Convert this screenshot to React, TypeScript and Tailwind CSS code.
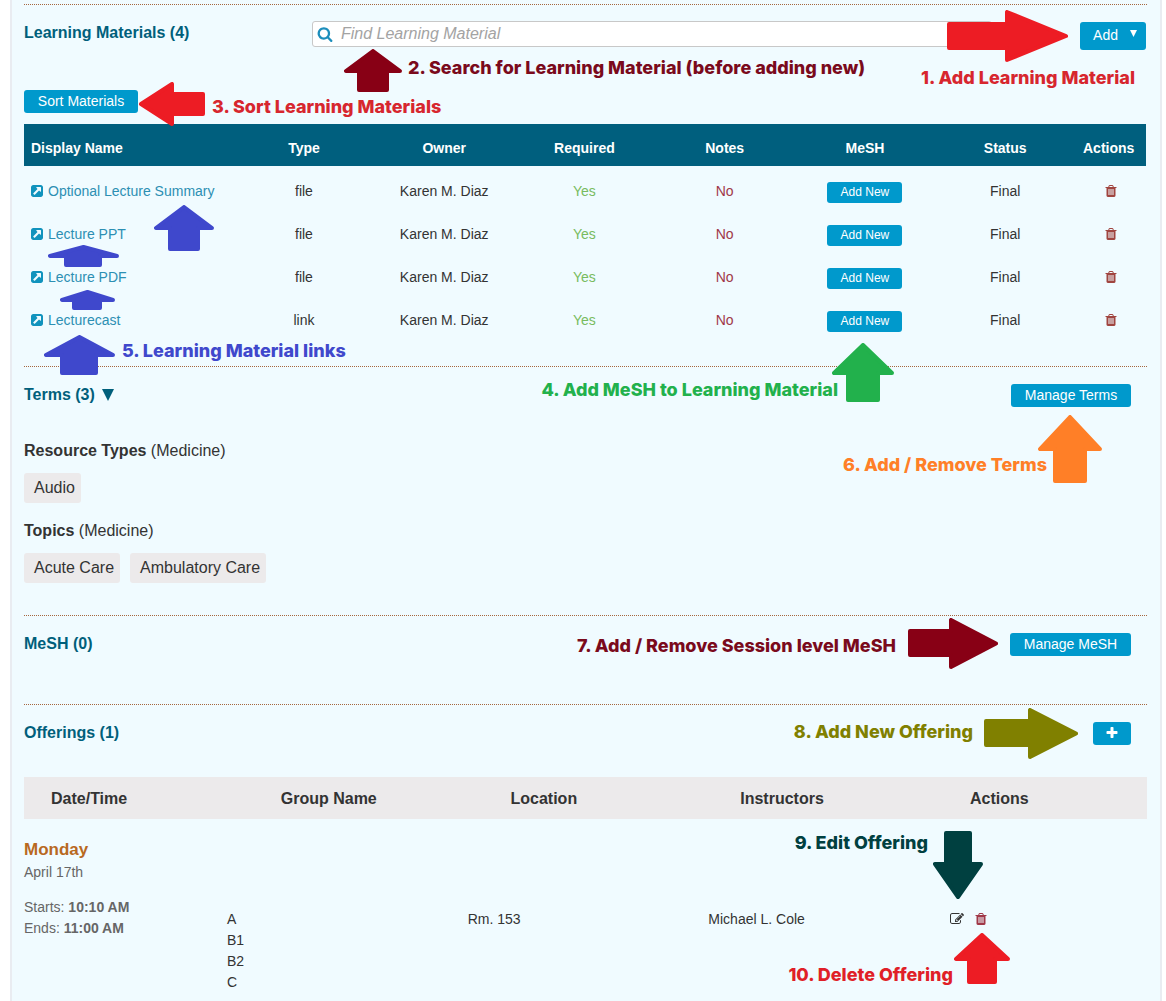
import React from 'react';

const PATHS = {
  search:
    'M1216 832q0-185-131.5-316.5t-316.5-131.5-316.5 131.5-131.5 316.5 131.5 316.5 316.5 131.5 316.5-131.5 131.5-316.5zm512 832q0 52-38 90t-90 38q-54 0-90-38l-343-342q-179 124-399 124-143 0-273.5-55.5t-225-150-150-225-55.5-273.5 55.5-273.5 150-225 225-150 273.5-55.5 273.5 55.5 225 150 150 225 55.5 273.5q0 220-124 399l343 343q37 37 37 90z',
  trash:
    'M704 1376v-704q0-14-9-23t-23-9h-64q-14 0-23 9t-9 23v704q0 14 9 23t23 9h64q14 0 23-9t9-23zm256 0v-704q0-14-9-23t-23-9h-64q-14 0-23 9t-9 23v704q0 14 9 23t23 9h64q14 0 23-9t9-23zm256 0v-704q0-14-9-23t-23-9h-64q-14 0-23 9t-9 23v704q0 14 9 23t23 9h64q14 0 23-9t9-23zm-544-992h448l-48-117q-7-9-17-11h-317q-10 2-17 11zm928 32v64q0 14-9 23t-23 9h-96v948q0 83-47 143.5t-113 60.5h-832q-66 0-113-58.5t-47-141.5v-952h-96q-14 0-23-9t-9-23v-64q0-14 9-23t23-9h309l70-167q15-37 54-63t79-26h320q40 0 79 26t54 63l70 167h309q14 0 23 9t9 23z',
  edit:
    'M888 1184l116-116-152-152-116 116v56h96v96h56zm440-720q-16-16-33 1l-350 350q-17 17-1 33t33-1l350-350q17-17 1-33zm80 594v190q0 119-84.5 203.5t-203.5 84.5h-832q-119 0-203.5-84.5t-84.5-203.5v-832q0-119 84.5-203.5t203.5-84.5h832q63 0 117 25 15 7 18 23 3 17-9 29l-49 49q-14 14-32 8-23-6-45-6h-832q-66 0-113 47t-47 113v832q0 66 47 113t113 47h832q66 0 113-47t47-113v-126q0-13 9-22l64-64q15-15 35-7t20 29zm-96-738l288 288-672 672h-288v-288zm444 132l-92 92-288-288 92-92q28-28 68-28t68 28l152 152q28 28 28 68t-28 68z',
  external:
    'M1408 928v-480q0-26-19-45t-45-19h-480q-42 0-59 39-17 41 14 70l144 144-534 534q-19 19-19 45t19 45l102 102q19 19 45 19t45-19l534-534 144 144q18 19 45 19 12 0 25-5 39-17 39-59zm256-512v960q0 119-84.5 203.5t-203.5 84.5h-960q-119 0-203.5-84.5t-84.5-203.5v-960q0-119 84.5-203.5t203.5-84.5h960q119 0 203.5 84.5t84.5 203.5z',
  plus: 'M1600 736v192q0 40-28 68t-68 28h-416v416q0 40-28 68t-68 28h-192q-40 0-68-28t-28-68v-416h-416q-40 0-68-28t-28-68v-192q0-40 28-68t68-28h416v-416q0-40 28-68t68-28h192q40 0 68 28t28 68v416h416q40 0 68 28t28 68z',
};

function Icon({ name, className }: { name: keyof typeof PATHS; className: string }) {
  return (
    <svg viewBox="0 0 1792 1792" fill="currentColor" aria-hidden="true" className={className}>
      <path d={PATHS[name]} />
    </svg>
  );
}

type Dir = 'up' | 'down' | 'left' | 'right';

/* Block arrow: `head` is the length of the head, `from` and `to` bound the shaft across. */
function Arrow({
  dir,
  w,
  h,
  head,
  from,
  to,
  className,
}: {
  dir: Dir;
  w: number;
  h: number;
  head: number;
  from: number;
  to: number;
  className: string;
}) {
  const vertical = dir === 'up' || dir === 'down';
  const length = vertical ? h : w;
  const across = vertical ? w : h;
  const r = 2;
  const outline = [
    [r, across / 2],
    [head - r, r],
    [head - r, from + r],
    [length - r, from + r],
    [length - r, to - r],
    [head - r, to - r],
    [head - r, across - r],
  ];
  const place = ([a, b]: number[]) => {
    if (dir === 'up') return [b, a];
    if (dir === 'down') return [b, h - a];
    if (dir === 'left') return [a, b];
    return [w - a, b];
  };
  return (
    <svg
      width={w}
      height={h}
      viewBox={`0 0 ${w} ${h}`}
      aria-hidden="true"
      className={`pointer-events-none absolute ${className}`}
    >
      <polygon
        points={outline.map((p) => place(p).join(',')).join(' ')}
        fill="currentColor"
        stroke="currentColor"
        strokeWidth={r * 2}
        strokeLinejoin="round"
      />
    </svg>
  );
}

function Note({ className, children }: { className: string; children: React.ReactNode }) {
  return (
    <p
      className={`absolute whitespace-nowrap font-[Inter,sans-serif] text-[18px] leading-[26px] font-extrabold ${className}`}
    >
      {children}
    </p>
  );
}

function Section({ className, children }: { className: string; children: React.ReactNode }) {
  return <section className={`relative border-t border-dotted border-[#a5673f] ${className}`}>{children}</section>;
}

function Title({ children }: { children: React.ReactNode }) {
  return <h2 className="text-base leading-6 font-bold text-[#005f7b]">{children}</h2>;
}

const ACTION = 'flex h-[23px] items-center justify-center rounded-[3px] bg-[#0099cc] pb-px text-sm text-white';

const MATERIALS = [
  { name: 'Optional Lecture Summary', type: 'file' },
  { name: 'Lecture PPT', type: 'file' },
  { name: 'Lecture PDF', type: 'file' },
  { name: 'Lecturecast', type: 'link' },
];

function Materials() {
  return (
    <Section className="pb-7">
      <div className="flex h-[61px] items-start pt-4">
        <div className="w-72 shrink-0">
          <Title>Learning Materials (4)</Title>
        </div>
        <div className="mr-[88px] flex h-[26px] flex-1 items-center rounded-[3px] border border-[#c8c8c8] bg-white pl-1">
          <Icon name="search" className="size-4 text-[#1d8ebc]" />
          <input
            type="text"
            aria-label="Find Learning Material"
            placeholder="Find Learning Material"
            className="ml-2 h-6 min-w-0 flex-1 bg-transparent text-base italic outline-none placeholder:text-[#a3a3a3]"
          />
        </div>
        <button
          type="button"
          className="mt-px mr-px flex h-7 w-[66px] shrink-0 items-center justify-end rounded-[3px] bg-[#0099cc] pr-[9px] pb-0.5 text-sm text-white"
        >
          Add
          <svg viewBox="0 0 8 8" className="mb-1 ml-3 size-[7px]" fill="currentColor" aria-hidden="true">
            <path d="M0 0h8l-4 8z" />
          </svg>
        </button>
      </div>

      <div className="flex h-[58px] items-start pt-6">
        <button type="button" className={`${ACTION} w-[114px]`}>
          Sort Materials
        </button>
      </div>

      <div className="pr-px">
        <table className="w-full table-fixed border-collapse text-sm text-[#333]">
          <colgroup>
            <col />
            <col className="w-[12.5%]" />
            <col className="w-[12.5%]" />
            <col className="w-[12.5%]" />
            <col className="w-[12.5%]" />
            <col className="w-[12.5%]" />
            <col className="w-[12.5%]" />
            <col className="w-[6.3%]" />
          </colgroup>
          <thead>
            <tr className="h-[42px] bg-[#005f7e] text-white">
              <th className="pt-1.5 pl-[7px] text-left">Display Name</th>
              <th className="pt-1.5">Type</th>
              <th className="pt-1.5">Owner</th>
              <th className="pt-1.5">Required</th>
              <th className="pt-1.5">Notes</th>
              <th className="pt-1.5">MeSH</th>
              <th className="pt-1.5">Status</th>
              <th className="pt-1.5 pr-1">Actions</th>
            </tr>
          </thead>
          <tbody className="text-center">
            {MATERIALS.map((m) => (
              <tr key={m.name} className="h-[43px]">
                <td className="pt-1.5 pl-1.5 text-left">
                  <a href="#" className="flex items-center gap-1 text-[#2c8fb3]">
                    <Icon name="external" className="size-[14px] text-[#1193bd]" />
                    {m.name}
                  </a>
                </td>
                <td className="pt-1.5">{m.type}</td>
                <td className="pt-1.5">Karen M. Diaz</td>
                <td className="pt-1.5 text-[#78bb60]">Yes</td>
                <td className="pt-1.5 text-[#a03848]">No</td>
                <td className="pt-[10px]">
                  <button
                    type="button"
                    className="mx-auto flex h-[21px] w-[75px] items-center justify-center rounded-[3px] bg-[#0099cc] pb-0.5 text-xs text-white"
                  >
                    Add New
                  </button>
                </td>
                <td className="pt-1.5">Final</td>
                <td className="pt-1.5">
                  <button type="button" aria-label={`Delete ${m.name}`} className="mx-auto block text-[#a04540]">
                    <Icon name="trash" className="size-[14px]" />
                  </button>
                </td>
              </tr>
            ))}
          </tbody>
        </table>
      </div>

      <Arrow dir="right" w={121} h={52} head={63} from={12} to={40} className="top-[5px] right-[79px] text-[#ed1c24]" />
      <Note className="top-[60px] right-3 text-[#d7262e]">1. Add Learning Material</Note>
      <Arrow dir="up" w={58} h={43} head={24} from={13} to={45} className="top-11 left-80 text-[#880015]" />
      <Note className="top-[50px] left-96 text-[#7a0a1c]">2. Search for Learning Material (before adding new)</Note>
      <Arrow dir="left" w={66} h={44} head={35} from={10} to={34} className="top-[77px] left-[115px] text-[#ed1c24]" />
      <Note className="top-[89px] left-[188px] text-[#d7262e]">3. Sort Learning Materials</Note>
      <Arrow dir="up" w={60} h={46} head={25} from={14} to={46} className="top-[200px] left-[130px] text-[#3f48cc]" />
      <Arrow dir="up" w={71} h={22} head={13} from={16} to={54} className="top-60 left-6 text-[#3f48cc]" />
      <Arrow dir="up" w={55} h={20} head={12} from={12} to={42} className="top-[285px] left-9 text-[#3f48cc]" />
      <Arrow dir="up" w={71} h={40} head={22} from={16} to={54} className="top-[330px] left-5 z-10 text-[#3f48cc]" />
      <Note className="top-[333px] left-[98px] text-[#3f48cc]">5. Learning Material links</Note>
      <Arrow dir="up" w={62} h={59} head={32} from={14} to={48} className="top-[338px] right-[253px] z-10 text-[#22b14c]" />
    </Section>
  );
}

const TERMS = [
  { group: 'Resource Types', items: ['Audio'] },
  { group: 'Topics', items: ['Acute Care', 'Ambulatory Care'] },
];

function Terms() {
  return (
    <Section className="pb-8">
      <div className="flex items-end justify-between pt-4 pr-4">
        <Title>
          <button type="button" className="flex items-center gap-[7px]">
            Terms (3)
            <svg viewBox="0 0 12 12" className="size-3" fill="currentColor" aria-hidden="true">
              <path d="M0 0h12l-6 12z" />
            </svg>
          </button>
        </Title>
        <button type="button" className={`${ACTION} w-[120px]`}>
          Manage Terms
        </button>
      </div>
      <div className="mt-8 flex flex-col gap-4 text-base text-[#333]">
        {TERMS.map((t) => (
          <div key={t.group}>
            <h3 className="leading-6">
              <b>{t.group}</b> (Medicine)
            </h3>
            <ul className="mt-[10px] flex gap-[10px]">
              {t.items.map((i) => (
                <li key={i} className="flex h-[30px] items-center rounded-[3px] bg-[#eceaeb] pr-1.5 pl-[10px]">
                  {i}
                </li>
              ))}
            </ul>
          </div>
        ))}
      </div>
      <Note className="top-[10px] right-[309px] text-[#22b14c]">4. Add MeSH to Learning Material</Note>
      <Arrow dir="up" w={64} h={68} head={36} from={15} to={49} className="top-12 right-[45px] text-[#ff7f27]" />
      <Note className="top-[85px] right-[100px] text-[#ff7f27]">6. Add / Remove Terms</Note>
    </Section>
  );
}

function Mesh() {
  return (
    <Section className="h-[89px]">
      <div className="flex items-end justify-between pt-4 pr-4">
        <Title>MeSH (0)</Title>
        <button type="button" className={`${ACTION} w-[121px]`}>
          Manage MeSH
        </button>
      </div>
      <Note className="top-[17px] right-[251px] text-[#7a0a1c]">7. Add / Remove Session level MeSH</Note>
      <Arrow dir="right" w={90} h={51} head={49} from={11} to={39} className="top-0.5 right-[149px] text-[#880015]" />
    </Section>
  );
}

function Offerings() {
  return (
    <Section className="pb-2">
      <div className="flex items-end justify-between pt-4 pr-4">
        <Title>Offerings (1)</Title>
        <button type="button" aria-label="Add offering" className={`${ACTION} w-[38px]`}>
          <Icon name="plus" className="size-[14px]" />
        </button>
      </div>

      <table className="mt-8 block w-full">
        <thead className="block">
          <tr className="grid h-[42px] grid-cols-[repeat(4,minmax(0,1fr))_177px] items-center bg-[#eceaeb] pt-0.5 pl-[27px] text-left text-base text-[#333]">
            <th>Date/Time</th>
            <th>Group Name</th>
            <th>Location</th>
            <th>Instructors</th>
            <th>Actions</th>
          </tr>
        </thead>
        <tbody className="block">
          <tr className="grid grid-cols-[203px_repeat(3,minmax(0,1fr))_198px] pt-[19px] text-sm text-[#333]">
            <td className="leading-[21px] text-[#666]">
              <div className="text-[17px] leading-6 font-bold text-[#b8691f]">Monday</div>
              <div>April 17th</div>
              <div className="mt-[14px]">
                Starts: <b>10:10 AM</b>
              </div>
              <div>
                Ends: <b>11:00 AM</b>
              </div>
            </td>
            <td className="pt-[71px] leading-[21px]">
              <ul>
                <li>A</li>
                <li>B1</li>
                <li>B2</li>
                <li>C</li>
              </ul>
            </td>
            <td className="pt-[71px] leading-[21px]">Rm. 153</td>
            <td className="pt-[71px] leading-[21px]">Michael L. Cole</td>
            <td className="flex items-start gap-[10px] pt-[74px] pl-px">
              <button type="button" aria-label="Edit offering" className="text-[#333]">
                <Icon name="edit" className="size-[14px]" />
              </button>
              <button type="button" aria-label="Delete offering" className="text-[#a03848]">
                <Icon name="trash" className="size-[14px]" />
              </button>
            </td>
          </tr>
        </tbody>
      </table>

      <Note className="top-[14px] right-[174px] text-[#808000]">8. Add New Offering</Note>
      <Arrow dir="right" w={94} h={51} head={50} from={11} to={39} className="top-[3px] right-[69px] text-[#808000]" />
      <Note className="top-[125px] right-[219px] text-[#004040]">9. Edit Offering</Note>
      <Arrow dir="down" w={50} h={68} head={37} from={11} to={39} className="top-[126px] right-[164px] text-[#004040]" />
      <Note className="top-[257px] right-[194px] text-[#e01f28]">10. Delete Offering</Note>
      <Arrow dir="up" w={56} h={51} head={28} from={13} to={43} className="top-[228px] right-[137px] text-[#ed1c24]" />
    </Section>
  );
}

export default function App() {
  return (
    <div className="min-h-screen bg-white font-['Liberation_Sans',Arial,sans-serif]">
      <main className="mr-1 ml-[10px] min-h-screen border-x-2 border-[#e9ecf1] bg-[#f0fbff] pt-1 pr-[13px] pl-3">
        <Materials />
        <Terms />
        <Mesh />
        <Offerings />
      </main>
    </div>
  );
}
